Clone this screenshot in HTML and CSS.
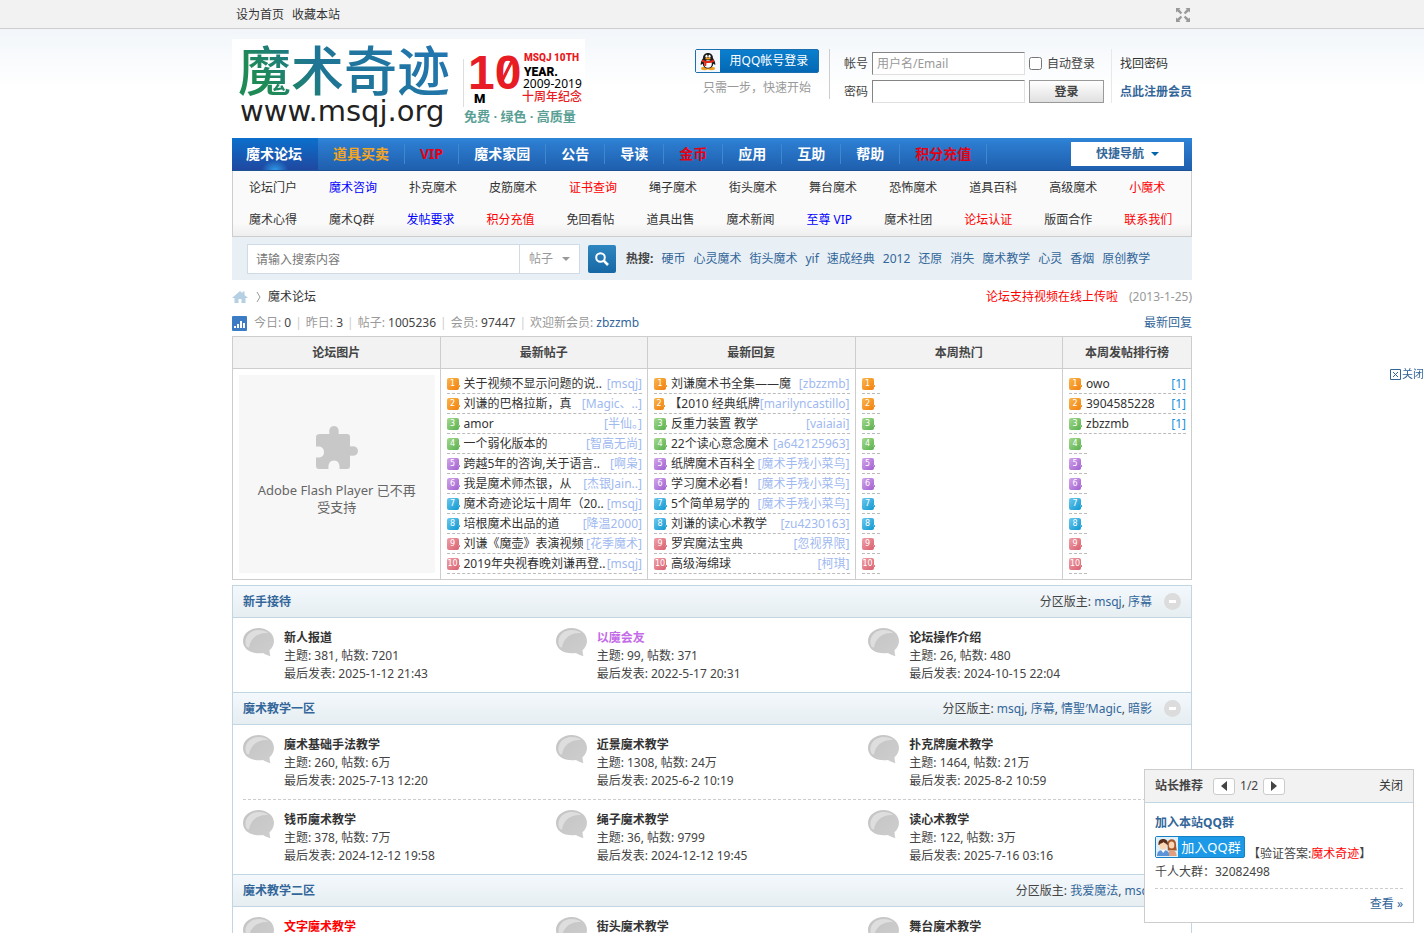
FILE: index.html
```html
<!DOCTYPE html>
<html lang="zh-CN">
  <head>
    <meta charset="UTF-8" />
    <meta name="viewport" content="width=device-width, initial-scale=1.0" />
    <title>魔术论坛 - 魔术奇迹</title>
    <link rel="stylesheet" href="styles.css">
  </head>
  <body>
    <!-- 公用图标 -->
    <svg class="sprite" aria-hidden="true">
      <defs>
        <linearGradient id="bubble-fill" x1="0" y1="0" x2="1" y2="1">
          <stop offset="0" stop-color="#c4c4c4" />
          <stop offset="1" stop-color="#cecece" />
        </linearGradient>
      </defs>
      <symbol id="bubble" viewBox="0 0 31 29">
        <path d="M15.500 0C24 0 31 5.500 31 13c0 4-2 7-4.500 9.200.1 2.200.4 4.200.9 6-3-.8-5.300-1.800-7.400-3.100C8.500 26.500 0 21.500 0 13 0 5.500 7 0 15.500 0z" fill="url(#bubble-fill)" />
        <path d="M3.500 18.500C0 11 5.500 2 15.500 2c4 0 7.500 1 10 3.200C16 4 7.500 9.500 6 19.500c-.8 0-1.800-.2-2.500-1z" fill="#dedede" />
      </symbol>
    </svg>

    <!-- 顶部 -->
    <div class="topbar">
      <div class="wrap topbar-in">
        <a href="#">设为首页</a>
        <a href="#">收藏本站</a>
        <a href="#" class="widescreen" aria-label="切换到宽版">
          <svg width="14" height="14" viewBox="0 0 14 14" fill="#999">
            <path d="M0 0h4.500L3.200 1.300 6.200 4.700 4.700 6.200 1.300 3.200 0 4.500zM14 0v4.500l-1.300-1.300-3.400 3-1.500-1.500 3-3.400L9.500 0zM0 14V9.500l1.300 1.300 3.400-3 1.500 1.500-3 3.400L4.500 14zM14 14H9.500l1.300-1.300-3-3.400 1.500-1.500 3.400 3L14 9.500z" />
          </svg>
        </a>
      </div>
    </div>

    <div class="header">
      <div class="wrap header-in">
        <a href="#" class="logo" aria-label="魔术奇迹">
          <svg width="353" height="92" viewBox="0 0 353 92">
            <defs>
              <linearGradient id="logo-fill" x1="0" y1="0.300" x2="1" y2="0">
                <stop offset="0" stop-color="#1f8a55" />
                <stop offset="0.300" stop-color="#1f7594" />
                <stop offset="1" stop-color="#2376b5" />
              </linearGradient>
            </defs>
            <rect width="353" height="92" fill="#fff" />
            <text x="6" y="52" class="logo-name" fill="url(#logo-fill)">魔术奇迹</text>
            <text x="8" y="82" class="logo-url">www.msqj.org</text>
            <path d="M231.500 20v48" stroke="#ddd" />
            <text x="236" y="50" class="logo-ten">10</text>
            <path d="M270 42l10-20" stroke="#e81c24" stroke-width="3" />
            <text x="242" y="64" class="logo-m">M</text>
            <text x="292" y="22" class="logo-th">MSQJ 10TH</text>
            <text x="292" y="37" class="logo-year">YEAR.</text>
            <text x="291" y="49" class="logo-range">2009-2019</text>
            <text x="290" y="62" class="logo-ann">十周年纪念</text>
            <text x="232" y="82" class="logo-slogan">免费 · 绿色 · 高质量</text>
          </svg>
        </a>

        <div class="qq-login">
          <button type="button" class="qq-btn">
            <svg width="24" height="22" viewBox="0 0 24 22">
              <rect width="24" height="22" fill="#f2f8fd" />
              <ellipse cx="8.500" cy="18.500" rx="3.500" ry="1.700" fill="#f0a020" />
              <ellipse cx="15.500" cy="18.500" rx="3.500" ry="1.700" fill="#f0a020" />
              <path d="M12 3c3.200 0 5 2.200 5 5.200 1 1.500 2.600 4 2.300 6.800l-2-1.200C17 17 15 18.500 12 18.500S7 17 6.700 13.800l-2 1.200C4.400 12.200 6 9.700 7 8.200 7 5.200 8.800 3 12 3z" fill="#1c1c1c" />
              <ellipse cx="12" cy="14" rx="3.800" ry="3.700" fill="#fff" />
              <ellipse cx="10.500" cy="6.300" rx="1.100" ry="1.500" fill="#fff" />
              <ellipse cx="13.500" cy="6.300" rx="1.100" ry="1.500" fill="#fff" />
              <ellipse cx="12" cy="8.600" rx="2.800" ry="1" fill="#f0a020" />
              <path d="M6.500 9.500c3.500 2 7.500 2 11 0l.8 2c-2.600 1.400-5.300 1.800-7.800 1.500l-.3 3-2-.3.200-3-2.700-1.200z" fill="#e02818" />
            </svg>
            <span>用QQ帐号登录</span>
          </button>
          <p>只需一步，快速开始</p>
        </div>

        <form class="login">
          <label for="username">帐号</label>
          <input type="text" id="username" placeholder="用户名/Email" />
          <span class="auto"><input type="checkbox" id="auto" /><label for="auto">自动登录</label></span>
          <label for="password">密码</label>
          <input type="password" id="password" />
          <button type="submit">登录</button>
        </form>

        <div class="login-links">
          <a href="#">找回密码</a>
          <a href="#" class="reg">点此注册会员</a>
        </div>
      </div>
    </div>

    <div class="wrap">
      <!-- 主导航 -->
      <div class="nav">
        <a href="#" class="active">魔术论坛</a>
        <a href="#" class="gold">道具买卖</a>
        <a href="#" class="hot">VIP</a>
        <a href="#">魔术家园</a>
        <a href="#">公告</a>
        <a href="#">导读</a>
        <a href="#" class="hot">金币</a>
        <a href="#">应用</a>
        <a href="#">互助</a>
        <a href="#">帮助</a>
        <a href="#" class="hot">积分充值</a>
        <button type="button" class="quick">快捷导航</button>
      </div>

      <div class="subnav">
        <a href="#">论坛门户</a>
        <a href="#" class="blue">魔术咨询</a>
        <a href="#">扑克魔术</a>
        <a href="#">皮筋魔术</a>
        <a href="#" class="red">证书查询</a>
        <a href="#">绳子魔术</a>
        <a href="#">街头魔术</a>
        <a href="#">舞台魔术</a>
        <a href="#">恐怖魔术</a>
        <a href="#">道具百科</a>
        <a href="#">高级魔术</a>
        <a href="#" class="red">小魔术</a>
        <a href="#">魔术心得</a>
        <a href="#">魔术Q群</a>
        <a href="#" class="blue">发帖要求</a>
        <a href="#" class="red">积分充值</a>
        <a href="#">免回看帖</a>
        <a href="#">道具出售</a>
        <a href="#">魔术新闻</a>
        <a href="#" class="blue">至尊 VIP</a>
        <a href="#">魔术社团</a>
        <a href="#" class="red">论坛认证</a>
        <a href="#">版面合作</a>
        <a href="#" class="red">联系我们</a>
      </div>

      <!-- 搜索 -->
      <form class="search">
        <input type="text" placeholder="请输入搜索内容" aria-label="搜索内容" />
        <span class="search-type">
          <select aria-label="搜索类型">
            <option>帖子</option>
            <option>用户</option>
          </select>
        </span>
        <button type="submit" aria-label="搜索">
          <svg width="14" height="14" viewBox="0 0 14 14" fill="none" stroke="#fff">
            <circle cx="5.500" cy="5.500" r="4.300" stroke-width="2" />
            <path d="M8.700 8.700l4.300 4.300" stroke-width="2.600" />
          </svg>
        </button>
        <div class="hotwords">
          <strong>热搜:</strong>
          <a href="#">硬币</a>
          <a href="#">心灵魔术</a>
          <a href="#">街头魔术</a>
          <a href="#">yif</a>
          <a href="#">速成经典</a>
          <a href="#">2012</a>
          <a href="#">还原</a>
          <a href="#">消失</a>
          <a href="#">魔术教学</a>
          <a href="#">心灵</a>
          <a href="#">香烟</a>
          <a href="#">原创教学</a>
        </div>
      </form>

      <div class="crumb">
        <a href="#" aria-label="首页">
          <svg width="16" height="14" viewBox="0 0 16 14" fill="#b5cfe3">
            <path d="M8 1L0 8h2.500v5H6.500V9h3v4h4V8H16L12.500 5V1.500h-2v1.700z" />
          </svg>
        </a>
        <svg class="sep" width="5" height="10" viewBox="0 0 5 10" fill="none" stroke="#999"><path d="M1 0l3 5-3 5" /></svg>
        <a href="#">魔术论坛</a>
        <a href="#" class="notice">论坛支持视频在线上传啦</a>
        <span class="date">(2013-1-25)</span>
      </div>

      <div class="stats">
        <svg width="15" height="15" viewBox="0 0 15 15">
          <rect width="15" height="15" rx="1" fill="#3b7cc4" />
          <path d="M2 10h2v2H2zM5 8h2v4H5zM8 5h2v7H8zM11 7h2v5h-2z" fill="#fff" />
        </svg>
        <p>今日: <em>0</em><i>|</i>昨日: <em>3</em><i>|</i>帖子: <em>1005236</em><i>|</i>会员: <em>97447</em><i>|</i>欢迎新会员: <a href="#">zbzzmb</a></p>
        <a href="#" class="latest">最新回复</a>
      </div>

      <!-- 四格 -->
      <table class="board">
        <thead>
          <tr>
            <th>论坛图片</th>
            <th>最新帖子</th>
            <th>最新回复</th>
            <th>本周热门</th>
            <th class="last">本周发帖排行榜</th>
          </tr>
        </thead>
        <tbody>
          <tr>
            <td>
              <div class="flash">
                <svg width="44" height="44" viewBox="0 0 44 44" fill="#c8c8c8">
                  <path d="M5 8h9.500C13.500 3 15.500 0 19 0s5.500 3 4.500 8H32q3 0 3 3v9.500c5-1 8 .8 8 4.500s-3 5.500-8 4.500V40q0 3-3 3h-7.500c.5-5.500-1.500-8.500-5.500-8.500s-6 3-5.500 8.500H4q-3 0-3-3v-8.500c5.500.5 8-1.500 8-5.500s-2.500-6-8-5.500V11q0-3 4-3z" />
                </svg>
                <p>Adobe Flash Player 已不再受支持</p>
              </div>
            </td>
            <td>
              <ol class="rank">
                <li><b class="n1">1</b><a href="#">关于视频不显示问题的说..</a><a href="#" class="by">[msqj]</a></li>
                <li><b class="n1">2</b><a href="#">刘谦的巴格拉斯，真</a><a href="#" class="by">[Magic、..]</a></li>
                <li><b class="n2">3</b><a href="#">amor</a><a href="#" class="by">[半仙。]</a></li>
                <li><b class="n2">4</b><a href="#">一个弱化版本的</a><a href="#" class="by">[智高无尚]</a></li>
                <li><b class="n3">5</b><a href="#">跨越5年的咨询,关于语言..</a><a href="#" class="by">[啊枭]</a></li>
                <li><b class="n3">6</b><a href="#">我是魔术师杰银，从</a><a href="#" class="by">[杰银Jain..]</a></li>
                <li><b class="n4">7</b><a href="#">魔术奇迹论坛十周年（20..</a><a href="#" class="by">[msqj]</a></li>
                <li><b class="n4">8</b><a href="#">培根魔术出品的道</a><a href="#" class="by">[降温2000]</a></li>
                <li><b class="n5">9</b><a href="#">刘谦《魔壶》表演视频</a><a href="#" class="by">[花季魔术]</a></li>
                <li><b class="n5">10</b><a href="#">2019年央视春晚刘谦再登..</a><a href="#" class="by">[msqj]</a></li>
              </ol>
            </td>
            <td>
              <ol class="rank">
                <li><b class="n1">1</b><a href="#">刘谦魔术书全集——魔</a><a href="#" class="by">[zbzzmb]</a></li>
                <li><b class="n1">2</b><a href="#">【2010 经典纸牌</a><a href="#" class="by">[marilyncastillo]</a></li>
                <li><b class="n2">3</b><a href="#">反重力装置 教学</a><a href="#" class="by">[vaiaiai]</a></li>
                <li><b class="n2">4</b><a href="#">22个读心意念魔术</a><a href="#" class="by">[a642125963]</a></li>
                <li><b class="n3">5</b><a href="#">纸牌魔术百科全</a><a href="#" class="by">[魔术手残小菜鸟]</a></li>
                <li><b class="n3">6</b><a href="#">学习魔术必看！</a><a href="#" class="by">[魔术手残小菜鸟]</a></li>
                <li><b class="n4">7</b><a href="#">5个简单易学的</a><a href="#" class="by">[魔术手残小菜鸟]</a></li>
                <li><b class="n4">8</b><a href="#">刘谦的读心术教学</a><a href="#" class="by">[zu4230163]</a></li>
                <li><b class="n5">9</b><a href="#">罗宾魔法宝典</a><a href="#" class="by">[忽视界限]</a></li>
                <li><b class="n5">10</b><a href="#">高级海绵球</a><a href="#" class="by">[柯琪]</a></li>
              </ol>
            </td>
            <td>
              <ol class="rank">
                <li class="empty"><b class="n1">1</b></li>
                <li class="empty"><b class="n1">2</b></li>
                <li class="empty"><b class="n2">3</b></li>
                <li class="empty"><b class="n2">4</b></li>
                <li class="empty"><b class="n3">5</b></li>
                <li class="empty"><b class="n3">6</b></li>
                <li class="empty"><b class="n4">7</b></li>
                <li class="empty"><b class="n4">8</b></li>
                <li class="empty"><b class="n5">9</b></li>
                <li class="empty"><b class="n5">10</b></li>
              </ol>
            </td>
            <td>
              <ol class="rank posts">
                <li><b class="n1">1</b><a href="#">owo</a><span class="by">[1]</span></li>
                <li><b class="n1">2</b><a href="#">3904585228</a><span class="by">[1]</span></li>
                <li><b class="n2">3</b><a href="#">zbzzmb</a><span class="by">[1]</span></li>
                <li class="empty"><b class="n2">4</b></li>
                <li class="empty"><b class="n3">5</b></li>
                <li class="empty"><b class="n3">6</b></li>
                <li class="empty"><b class="n4">7</b></li>
                <li class="empty"><b class="n4">8</b></li>
                <li class="empty"><b class="n5">9</b></li>
                <li class="empty"><b class="n5">10</b></li>
              </ol>
            </td>
          </tr>
        </tbody>
      </table>

      <!-- 版块列表 -->
      <div class="forums">
        <div class="cat">
          <h2><a href="#">新手接待</a></h2>
          <p>分区版主: <a href="#">msqj</a>, <a href="#">序幕</a></p>
          <button type="button" aria-label="收起"></button>
        </div>
        <div class="row">
          <div class="forum">
            <svg width="31" height="29"><use href="#bubble" /></svg>
            <div><h3><a href="#">新人报道</a></h3><p>主题: 381, 帖数: 7201</p><p>最后发表: 2025-1-12 21:43</p></div>
          </div>
          <div class="forum">
            <svg width="31" height="29"><use href="#bubble" /></svg>
            <div><h3><a href="#" class="purple">以魔会友</a></h3><p>主题: 99, 帖数: 371</p><p>最后发表: 2022-5-17 20:31</p></div>
          </div>
          <div class="forum">
            <svg width="31" height="29"><use href="#bubble" /></svg>
            <div><h3><a href="#">论坛操作介绍</a></h3><p>主题: 26, 帖数: 480</p><p>最后发表: 2024-10-15 22:04</p></div>
          </div>
        </div>

        <div class="cat">
          <h2><a href="#">魔术教学一区</a></h2>
          <p>分区版主: <a href="#">msqj</a>, <a href="#">序幕</a>, <a href="#">情聖′Magic</a>, <a href="#">暗影</a></p>
          <button type="button" aria-label="收起"></button>
        </div>
        <div class="row">
          <div class="forum">
            <svg width="31" height="29"><use href="#bubble" /></svg>
            <div><h3><a href="#">魔术基础手法教学</a></h3><p>主题: 260, 帖数: 6万</p><p>最后发表: 2025-7-13 12:20</p></div>
          </div>
          <div class="forum">
            <svg width="31" height="29"><use href="#bubble" /></svg>
            <div><h3><a href="#">近景魔术教学</a></h3><p>主题: 1308, 帖数: 24万</p><p>最后发表: 2025-6-2 10:19</p></div>
          </div>
          <div class="forum">
            <svg width="31" height="29"><use href="#bubble" /></svg>
            <div><h3><a href="#">扑克牌魔术教学</a></h3><p>主题: 1464, 帖数: 21万</p><p>最后发表: 2025-8-2 10:59</p></div>
          </div>
        </div>
        <div class="row">
          <div class="forum">
            <svg width="31" height="29"><use href="#bubble" /></svg>
            <div><h3><a href="#">钱币魔术教学</a></h3><p>主题: 378, 帖数: 7万</p><p>最后发表: 2024-12-12 19:58</p></div>
          </div>
          <div class="forum">
            <svg width="31" height="29"><use href="#bubble" /></svg>
            <div><h3><a href="#">绳子魔术教学</a></h3><p>主题: 36, 帖数: 9799</p><p>最后发表: 2024-12-12 19:45</p></div>
          </div>
          <div class="forum">
            <svg width="31" height="29"><use href="#bubble" /></svg>
            <div><h3><a href="#">读心术教学</a></h3><p>主题: 122, 帖数: 3万</p><p>最后发表: 2025-7-16 03:16</p></div>
          </div>
        </div>

        <div class="cat">
          <h2><a href="#">魔术教学二区</a></h2>
          <p>分区版主: <a href="#">我爱魔法</a>, <a href="#">msqj</a></p>
          <button type="button" aria-label="收起"></button>
        </div>
        <div class="row">
          <div class="forum">
            <svg width="31" height="29"><use href="#bubble" /></svg>
            <div><h3><a href="#" class="red">文字魔术教学</a></h3></div>
          </div>
          <div class="forum">
            <svg width="31" height="29"><use href="#bubble" /></svg>
            <div><h3><a href="#">街头魔术教学</a></h3></div>
          </div>
          <div class="forum">
            <svg width="31" height="29"><use href="#bubble" /></svg>
            <div><h3><a href="#">舞台魔术教学</a></h3></div>
          </div>
        </div>
      </div>
    </div>

    <!-- 右侧浮动关闭 -->
    <a href="#" class="side-close">
      <svg width="11" height="11" viewBox="0 0 11 11" fill="none" stroke="#369"><path d="M.5.500h10v10H.5zM3 3l5 5M8 3L3 8" /></svg>关闭
    </a>

    <!-- 站长推荐 -->
    <div class="popup">
      <div class="popup-head">
        <strong>站长推荐</strong>
        <button type="button" aria-label="上一条"><svg width="6" height="10" viewBox="0 0 6 10" fill="#444"><path d="M6 0v10L0 5z" /></svg></button>
        <span>1/2</span>
        <button type="button" aria-label="下一条"><svg width="6" height="10" viewBox="0 0 6 10" fill="#444"><path d="M0 0v10l6-5z" /></svg></button>
        <a href="#" class="close">关闭</a>
      </div>
      <div class="popup-body">
        <h4><a href="#">加入本站QQ群</a></h4>
        <div class="join">
          <button type="button">
            <svg width="22" height="20" viewBox="0 0 22 20">
              <rect width="22" height="20" fill="#dff0fb" />
              <path d="M11.500 7c0-3 1.700-4.700 4.200-4.700S20 4 20 7.200c0 2.400.5 4 .8 6.300h-9z" fill="#a4572a" />
              <ellipse cx="15.600" cy="8" rx="2.800" ry="3.600" fill="#fad6b4" />
              <path d="M12 19c0-4 1-6 3.600-6s5 2 5 6z" fill="#e0a080" />
              <path d="M2.500 8C2 4 4 2 7.200 2s5 2 4.500 6z" fill="#5a2f1a" />
              <ellipse cx="7.200" cy="8.600" rx="3.700" ry="4" fill="#fad6b4" />
              <path d="M3 7c2-.3 3.500-1 4.500-2 1 1.200 2.300 1.800 4 2l-.3-2.500L7.500 3 3.500 4.500z" fill="#5a2f1a" />
              <path d="M1 19c0-4 2-6 6.200-6s6 2 6 6z" fill="#5c94d8" />
              <path d="M5 13l2.200 3 2.200-3z" fill="#fff" />
            </svg>
            <span>加入QQ群</span>
          </button>
          <p>【验证答案:<a href="#" class="red">魔术奇迹</a>】</p>
        </div>
        <p class="num">千人大群：32082498</p>
        <a href="#" class="more">查看 »</a>
      </div>
    </div>
  </body>
</html>
```

FILE: styles.css
```css
/* 全局 */
* {
  box-sizing: border-box;
}

body {
  margin: 0;
  height: 100vh;
  overflow: hidden;
  background: #fff;
  color: #444;
  font: 12px/18px "Noto Sans", "Noto Sans CJK SC", sans-serif;
}

a {
  color: #333;
  text-decoration: none;
}

a:hover {
  text-decoration: underline;
}

p, h2, h3, h4, ol {
  margin: 0;
  padding: 0;
  font-size: 12px;
}

input, button, select {
  font: inherit;
  color: inherit;
}

button {
  cursor: pointer;
}

.wrap {
  max-width: 960px;
  margin: 0 auto;
}

.sprite {
  position: absolute;
  width: 0;
  height: 0;
}

a.red, .subnav a.red {
  color: #f00;
}

a.purple {
  color: #c46be8;
}

/* 顶部条 */
.topbar {
  background: #f2f2f2;
  border-bottom: 1px solid #cdcdcd;
}

.topbar-in {
  display: flex;
  align-items: center;
  gap: 8px;
  height: 28px;
  padding: 1px 2px 0 4px;
}

.widescreen {
  display: flex;
  margin-left: auto;
}

/* 页头 */
.header {
  background: linear-gradient(#f2f6fa, #fff 60px);
}

.header-in {
  display: flex;
  align-items: flex-start;
  padding: 10px 0 7px;
}

.logo {
  display: flex;
  margin-right: auto;
}

.logo-name {
  font: 500 53px "Noto Sans CJK SC", sans-serif;
}

.logo-url {
  font: 29px "DejaVu Sans", sans-serif;
  fill: #222;
}

.logo-ten {
  font: bold 48px "Liberation Sans", sans-serif;
  fill: #e81c24;
}

.logo-m {
  font: 900 13px Roboto, sans-serif;
  fill: #000;
}

.logo-th {
  font: 900 10px Roboto, sans-serif;
  fill: #e81c24;
}

.logo-year {
  font: 900 12px Roboto, sans-serif;
  fill: #000;
}

.logo-range {
  font: 12px "Noto Sans", sans-serif;
  fill: #000;
}

.logo-ann {
  font: 500 12px "Noto Sans CJK SC", sans-serif;
  fill: #e81c24;
}

.logo-slogan {
  font: bold 13px "Noto Sans", "Noto Sans CJK SC", sans-serif;
  fill: #5a9f95;
}

.qq-login {
  margin-top: 10px;
  padding-right: 10px;
  border-right: 1px solid #cdcdcd;
  text-align: center;
  color: #999;
}

.qq-login p {
  margin: 6px 0 2px;
}

.qq-btn {
  display: flex;
  align-items: center;
  width: 124px;
  height: 24px;
  padding: 0;
  border: 1px solid #1b6fae;
  border-radius: 2px;
  background: linear-gradient(#0a7fce, #0468b4);
  color: #fff;
}

.qq-btn span {
  flex: 1;
}

.login {
  display: grid;
  grid-template-columns: auto 153px 75px;
  grid-auto-rows: 23px;
  gap: 5px 4px;
  align-items: center;
  margin: 13px 7px 0 14px;
}

.login > input {
  width: 100%;
  height: 23px;
  padding: 0 4px;
  border: 1px solid;
  border-color: #848484 #e0e0e0 #e0e0e0 #848484;
  background: #fff;
}

.login input::placeholder {
  color: #999;
}

.login button {
  height: 23px;
  padding: 0;
  border: 1px solid #999;
  background: linear-gradient(#fff, #e0e0e0);
  font-weight: bold;
}

.auto {
  display: flex;
  align-items: center;
  gap: 5px;
}

.auto input {
  margin: 0;
}

.login-links {
  display: flex;
  flex-direction: column;
  gap: 10px;
  margin-top: 10px;
  padding: 6px 0 2px 8px;
  border-left: 1px solid #e8e8e8;
}

.login-links .reg {
  color: #369;
  font-weight: bold;
}

/* 主导航 */
.nav {
  display: flex;
  align-items: center;
  height: 33px;
  border-bottom: 1px solid #1c5293;
  background: linear-gradient(#2e86d8, #2b7acd 20%, #1f5fae);
}

.nav a {
  padding: 0 15px;
  border-right: 1px solid #3f88d0;
  color: #fff;
  font-size: 14px;
  font-weight: bold;
  line-height: 20px;
}

.nav a.active {
  padding: 0 16px 0 14px;
  border-right: 0;
  background: radial-gradient(ellipse at 50% 100%, #2e9ae8, transparent 22%), linear-gradient(#0b70cc, #2048a0);
  line-height: 32px;
}

.nav a.gold {
  color: #f5a623;
}

.nav a.hot {
  color: #e60012;
}

.quick {
  display: flex;
  align-items: center;
  justify-content: center;
  gap: 7px;
  width: 113px;
  height: 24px;
  margin: 0 8px 0 auto;
  padding: 0;
  border: 0;
  background: #fff;
  color: #369;
  font-weight: bold;
}

.quick::after {
  content: "";
  border: 4px solid transparent;
  border-top-color: #06a;
  border-bottom: 0;
}

.subnav {
  display: flex;
  flex-wrap: wrap;
  padding-top: 1px;
  border: 1px solid #cdcdcd;
  border-top: 0;
  background: linear-gradient(#fafafa 80%, #eee);
}

.subnav a {
  padding: 0 16px;
  line-height: 32px;
}

.subnav a.blue {
  color: #00f;
}

/* 搜索 */
.search {
  display: flex;
  align-items: center;
  height: 43px;
  padding: 0 15px;
  background: #e8eff5;
}

.search > input {
  width: 273px;
  height: 30px;
  padding: 1px 8px 0;
  border: 1px solid #cfdbe6;
  background: #fff;
}

.search input::placeholder {
  color: #777;
}

.search-type {
  position: relative;
}

.search-type::after {
  content: "";
  position: absolute;
  right: 10px;
  top: 13px;
  border: 4px solid transparent;
  border-top-color: #999;
  border-bottom: 0;
  pointer-events: none;
}

.search-type select {
  display: block;
  width: 60px;
  height: 30px;
  padding: 1px 9px 0;
  border: 1px solid #cfdbe6;
  border-left: 0;
  border-radius: 0;
  background: #fff;
  color: #999;
  appearance: none;
}

.search button {
  display: flex;
  align-items: center;
  justify-content: center;
  width: 28px;
  height: 28px;
  margin: 0 10px 0 8px;
  padding: 0;
  border: 0;
  border-radius: 2px;
  background: linear-gradient(#2e86c0, #1668a4);
}

.hotwords {
  display: flex;
  gap: 8px;
  white-space: nowrap;
}

.hotwords a {
  color: #369;
}

/* 位置和统计 */
.crumb {
  display: flex;
  align-items: center;
  height: 26px;
  margin-top: 4px;
}

.crumb a:first-child {
  display: flex;
}

.crumb .sep {
  margin: 0 7px 0 8px;
}

.crumb .notice {
  margin-left: auto;
  color: #f00;
}

.crumb .date {
  margin-left: 11px;
  color: #999;
}

.stats {
  display: flex;
  align-items: center;
  height: 26px;
  color: #999;
}

.stats p {
  margin-left: 7px;
}

.stats em {
  color: #444;
  font-style: normal;
}

.stats i {
  margin: 0 4px;
  color: #ccc;
  font-style: normal;
}

.stats a {
  color: #369;
}

.stats .latest {
  margin-left: auto;
}

/* 四格 */
.board {
  width: 100%;
  table-layout: fixed;
  border-collapse: collapse;
}

.board th {
  padding: 1px 0 0;
  border: 1px solid #cdcdcd;
  background: #f2f2f2;
  line-height: 30px;
}

.board th.last {
  width: 129px;
}

.board td {
  padding: 5px 5px 5px 6px;
  border: 1px solid #cdcdcd;
  vertical-align: top;
}

.flash {
  display: flex;
  flex-direction: column;
  align-items: center;
  gap: 12px;
  height: 198px;
  margin-top: 1px;
  padding: 51px 15px 0;
  background: #f7f7f7;
  color: #666;
  text-align: center;
}

.flash p {
  font-size: 13px;
  line-height: 17px;
}

.rank {
  list-style: none;
}

.rank li {
  display: flex;
  align-items: center;
  height: 20px;
  border-bottom: 1px dashed #bbb;
  white-space: nowrap;
}

.rank li.empty {
  width: 18px;
}

.rank b {
  position: relative;
  width: 12px;
  height: 12px;
  margin-right: 5px;
  border-radius: 2px;
  color: #fff;
  font: 8px/12px "DejaVu Sans", sans-serif;
  text-align: center;
}

.rank b::after {
  content: "";
  position: absolute;
  right: -1px;
  bottom: 3px;
  width: 2px;
  height: 2px;
  background: inherit;
}

.n1 {
  background: linear-gradient(135deg, #fbb54a, #f08010);
}

.n2 {
  background: linear-gradient(135deg, #a5d98c, #58b050);
}

.n3 {
  background: linear-gradient(135deg, #d3a5ea, #a060d0);
}

.n4 {
  background: linear-gradient(135deg, #6cc8ee, #1098d0);
}

.n5 {
  background: linear-gradient(135deg, #f0a0a8, #d86070);
}

.rank .by {
  margin-left: auto;
  color: #a0b9f0;
}

.rank.posts .by {
  color: #1a8fdc;
}

/* 版块列表 */
.forums {
  margin-top: 5px;
  border: 1px solid #c2d5e3;
}

.cat {
  display: flex;
  align-items: center;
  height: 32px;
  padding: 0 10px;
  border-bottom: 1px solid #c2d5e3;
  background: linear-gradient(#f3f8fc, #e6eef2);
}

.row + .cat {
  height: 33px;
  border-top: 1px solid #c2d5e3;
}

.cat a {
  color: #369;
}

.cat p {
  margin-left: auto;
}

.cat button {
  display: flex;
  align-items: center;
  justify-content: center;
  width: 17px;
  height: 17px;
  margin-left: 12px;
  padding: 0;
  border: 0;
  border-radius: 50%;
  background: #dcdcdc;
}

.cat button::after {
  content: "";
  width: 7px;
  height: 3px;
  background: #fff;
}

.row {
  display: grid;
  grid-template-columns: repeat(3, 1fr);
  margin: 0 10px;
}

.row + .row {
  border-top: 1px dashed #cdcdcd;
}

.forum {
  display: flex;
  gap: 10px;
  padding: 11px 0 9px;
}

.forum svg {
  margin-top: -1px;
}

/* 浮动层 */
.side-close {
  position: fixed;
  right: 0;
  top: 365px;
  display: flex;
  align-items: center;
  gap: 1px;
  color: #369;
  font-size: 11px;
}

.popup {
  position: fixed;
  right: 10px;
  bottom: 10px;
  width: 270px;
  border: 1px solid #cdcdcd;
  background: #fff;
}

.popup-head {
  display: flex;
  align-items: center;
  gap: 5px;
  height: 33px;
  padding: 0 10px;
  border-bottom: 1px solid #c2d5e3;
  background: #f2f2f2;
}

.popup-head strong {
  margin-right: 5px;
}

.popup-head button {
  display: flex;
  align-items: center;
  justify-content: center;
  width: 22px;
  height: 17px;
  padding: 0;
  border: 1px solid #ccc;
  border-radius: 3px;
  background: #fff;
}

.popup-head .close {
  margin-left: auto;
}

.popup-body {
  padding: 11px 10px 9px;
}

.popup-body h4 a {
  color: #369;
}

.join {
  display: flex;
  align-items: flex-start;
  gap: 3px;
  margin-top: 4px;
}

.join button {
  display: flex;
  align-items: center;
  width: 90px;
  height: 22px;
  padding: 0;
  border: 1px solid #1580c4;
  border-radius: 2px;
  background: #1c9ae8;
  color: #fff;
  font-size: 13px;
  white-space: nowrap;
}

.join button span {
  flex: 1;
}

.join p {
  padding-top: 9px;
}

.num {
  padding-bottom: 7px;
  border-bottom: 1px dashed #cdcdcd;
}

.popup-body .more {
  display: block;
  margin-top: 6px;
  color: #369;
  text-align: right;
}
```
